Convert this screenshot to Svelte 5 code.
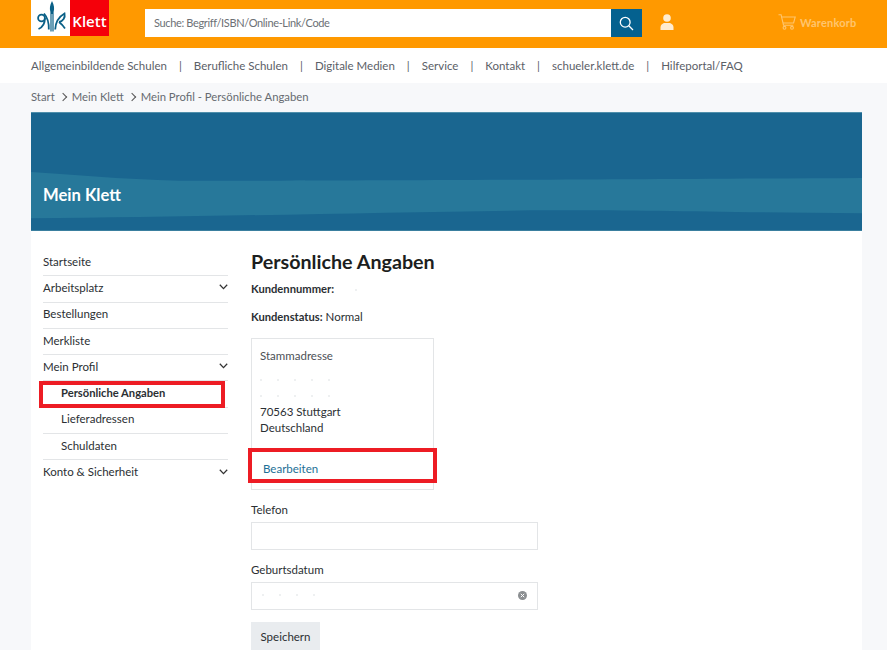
<script>
	const topLinks = [
		'Allgemeinbildende Schulen',
		'Berufliche Schulen',
		'Digitale Medien',
		'Service',
		'Kontakt',
		'schueler.klett.de',
		'Hilfeportal/FAQ'
	];

	const sideNav = [
		{ label: 'Startseite' },
		{ label: 'Arbeitsplatz', arrow: true },
		{ label: 'Bestellungen' },
		{ label: 'Merkliste' },
		{ label: 'Mein Profil', arrow: true },
		{ label: 'Persönliche Angaben', sub: true, active: true },
		{ label: 'Lieferadressen', sub: true },
		{ label: 'Schuldaten', sub: true },
		{ label: 'Konto & Sicherheit', arrow: true }
	];
</script>

<header class="topbar">
	<a class="logo" href="#top" aria-label="Klett">
		<span class="logo-mark">
			<svg width="39" height="36" viewBox="0 0 39 36" fill="none" stroke="#0a6087" stroke-width="1.800" aria-hidden="true">
				<path d="M21 1C18.800 5 18.400 8.500 19.400 12V31.500H20.600V14H21.400V31.500H22.600V12C23.600 8.500 23.200 5 21 1Z" fill="#0a6087" stroke="none" />
				<circle cx="10.500" cy="18" r="3.400" />
				<path d="M13.900 18C14 23 12 27 7.500 29" />
				<path d="M17.800 29.500C18 23 17 18 13 13.500" />
				<path d="M24.200 29.500C24.500 22 27.500 17 33.500 13.500C34.500 17.500 32 21.500 28 22" />
				<path d="M28 22C30 23.500 32 25.500 34 28.500" />
			</svg>
		</span>
		<span class="logo-word">Klett</span>
	</a>

	<form class="search" onsubmit={(e) => e.preventDefault()}>
		<input type="text" placeholder="Suche: Begriff/ISBN/Online-Link/Code" />
		<button type="submit" aria-label="Suchen">
			<svg width="15" height="15" viewBox="0 0 15 15" fill="none" stroke="#fff" stroke-width="1.300">
				<circle cx="6.200" cy="6.200" r="4.900" />
				<path d="M9.800 9.800l4.200 4.200" />
			</svg>
		</button>
	</form>

	<a class="user" href="#top" aria-label="Konto">
		<svg width="14" height="16" viewBox="0 0 14 16" fill="#ffecd0">
			<circle cx="7" cy="4" r="3.800" />
			<path d="M0.500 16v-2.500C0.500 10.500 3 9 5 9h4c2 0 4.500 1.500 4.500 4.500V16z" />
		</svg>
	</a>

	<a class="cart" href="#top">
		<svg width="18" height="16" viewBox="0 0 18 16" fill="none" stroke="#ffc56d" stroke-width="1.100">
			<path d="M0.500 0.800h2.600l2.400 10.400h9.800" />
			<path d="M3.600 3h13.600l-1.600 6H5" />
			<circle cx="6.500" cy="13.800" r="1.400" />
			<circle cx="14" cy="13.800" r="1.400" />
		</svg>
		<span>Warenkorb</span>
	</a>
</header>

<nav class="toplinks">
	{#each topLinks as link, i}
		{#if i > 0}<span class="sep">|</span>{/if}
		<a href="#top">{link}</a>
	{/each}
</nav>

<div class="breadcrumb">
	<a href="#top">Start</a>
	<span class="crumb-arrow"></span>
	<a href="#top">Mein Klett</a>
	<span class="crumb-arrow"></span>
	<span>Mein Profil - Persönliche Angaben</span>
</div>

<main class="page">
	<section class="hero">
		<svg class="wave" viewBox="0 0 831 119" preserveAspectRatio="none" aria-hidden="true">
			<path d="M0 60C60 64 110 69 170 69C300 69 500 68 831 66V102C700 101 580 98 500 99C350 101 150 106 0 107Z" fill="#27789a" />
		</svg>
		<h2>Mein Klett</h2>
	</section>

	<div class="body">
		<aside class="sidebar">
			{#each sideNav as item}
				<a class="side-item" class:sub={item.sub} class:active={item.active} href="#top">
					<span>{item.label}</span>
					{#if item.arrow}
						<svg width="9" height="6" viewBox="0 0 9 6" fill="none" stroke="#333" stroke-width="1.300">
							<path d="M0.800 0.800L4.500 4.600L8.200 0.800" />
						</svg>
					{/if}
					{#if item.active}<span class="mark mark-side"></span>{/if}
				</a>
			{/each}
		</aside>

		<div class="content">
			<h1>Persönliche Angaben</h1>
			<p class="fact first"><strong>Kundennummer:</strong><span class="redacted short"></span></p>
			<p class="fact"><strong>Kundenstatus:</strong> Normal</p>

			<div class="address">
				<div class="address-body">
					<div class="address-title">Stammadresse</div>
					<div class="hidden-line"><span class="redacted"></span></div>
					<div class="hidden-line"><span class="redacted"></span></div>
					<div>70563 Stuttgart</div>
					<div>Deutschland</div>
				</div>
				<div class="address-foot">
					<a href="#top">Bearbeiten</a>
					<span class="mark mark-edit"></span>
				</div>
			</div>

			<label class="field">
				<span>Telefon</span>
				<input type="text" />
			</label>

			<label class="field">
				<span>Geburtsdatum</span>
				<span class="input-wrap">
					<input type="text" />
					<span class="redacted in-input"></span>
					<svg class="clear" width="9" height="9" viewBox="0 0 9 9">
						<circle cx="4.500" cy="4.500" r="4.500" fill="#8c8f92" />
						<path d="M2.800 2.800l3.400 3.400M6.200 2.800L2.800 6.200" stroke="#fff" stroke-width="1" />
					</svg>
				</span>
			</label>

			<button class="save" type="button">Speichern</button>
		</div>
	</div>
</main>

<style>
	:global(body) {
		margin: 0;
		height: 650px;
		overflow: hidden;
		background: #f7f8fa;
		font-family: Lato, 'Noto Sans', sans-serif;
		font-size: 11.500px;
		color: #2b2f33;
	}

	a {
		color: inherit;
		text-decoration: none;
	}

	strong {
		font-size: 11.200px;
	}

	.topbar {
		display: flex;
		align-items: flex-start;
		height: 48px;
		padding-left: 31px;
		background: #ff9900;
		box-sizing: border-box;
	}

	.logo {
		display: flex;
		width: 78px;
		height: 36px;
	}

	.logo-mark {
		width: 39px;
		background: #fff;
		line-height: 0;
	}

	.logo-word {
		width: 39px;
		background: #f5000a;
		color: #fff;
		font-family: 'Open Sans', sans-serif;
		font-size: 15px;
		font-weight: 600;
		line-height: 42px;
		text-align: center;
	}

	.search {
		display: flex;
		width: 497px;
		height: 28px;
		margin: 9px 0 0 36px;
	}

	.search input {
		flex: 1;
		min-width: 0;
		padding: 0 9px 2px;
		border: 0;
		border-radius: 0;
		background: #fff;
		font: inherit;
		font-size: 11px;
		letter-spacing: -0.350px;
		outline: none;
	}

	.search input::placeholder {
		color: #6c7075;
		opacity: 1;
	}

	.search button {
		display: flex;
		align-items: center;
		justify-content: center;
		width: 31px;
		padding: 0;
		border: 0;
		background: #04618f;
	}

	.user {
		margin: 14px 0 0 18px;
		line-height: 0;
	}

	.cart {
		display: flex;
		align-items: center;
		gap: 4px;
		margin: 14px 0 0 104px;
		color: #ffc56d;
		font-size: 11px;
		font-weight: 700;
		letter-spacing: 0.2px;
	}

	.toplinks {
		display: flex;
		align-items: center;
		height: 35px;
		padding-left: 31px;
		background: #fff;
		color: #5b6067;
		white-space: nowrap;
	}

	.sep {
		margin: 0 12px;
	}

	.breadcrumb {
		display: flex;
		align-items: center;
		gap: 5.500px;
		height: 29px;
		padding: 0 0 2px 31px;
		box-sizing: border-box;
		color: #666b71;
		font-size: 11.300px;
	}

	.crumb-arrow {
		width: 5px;
		height: 5px;
		border-top: 1px solid #555;
		border-right: 1px solid #555;
		transform: rotate(45deg);
	}

	.page {
		margin: 0 25px 0 31px;
		background: #fff;
	}

	.hero {
		position: relative;
		display: flex;
		align-items: center;
		height: 119px;
		padding: 47px 0 0 12px;
		box-sizing: border-box;
		background: #1a6690;
		border-top: 1px solid #4f8fab;
		border-bottom: 1px solid #3a7f9f;
	}

	.wave {
		position: absolute;
		inset: 0;
		width: 100%;
		height: 100%;
	}

	.hero h2 {
		position: relative;
		margin: 0;
		color: #fff;
		font-size: 16.600px;
		font-weight: 700;
	}

	.body {
		display: flex;
		padding: 18px 0 0 12px;
	}

	.sidebar {
		display: flex;
		flex-direction: column;
		width: 185px;
		margin-right: 23px;
		padding-top: 1px;
	}

	.side-item {
		position: relative;
		display: flex;
		align-items: center;
		justify-content: space-between;
		height: 26.300px;
		padding-bottom: 3px;
		border-bottom: 1px solid #e3e5e7;
		box-sizing: border-box;
	}

	.side-item:last-child {
		padding-bottom: 4px;
		border-bottom: 0;
	}

	.side-item.sub {
		padding-left: 18px;
	}

	.side-item.active {
		font-size: 11.200px;
		font-weight: 700;
	}

	.mark {
		position: absolute;
		border: 4px solid #ed1c24;
		box-sizing: border-box;
		pointer-events: none;
	}

	.mark-side {
		top: 0;
		left: -4px;
		width: 186px;
		height: 27px;
	}

	.content {
		flex: 1;
	}

	h1 {
		margin: 0;
		color: #1c1e20;
		font-size: 19.700px;
		font-weight: 700;
		line-height: 26px;
	}

	.fact {
		margin: 0 0 14px;
		line-height: 14px;
	}

	.fact.first {
		margin-top: 7px;
	}

	.redacted {
		display: block;
		width: 78px;
		height: 2px;
		background: repeating-linear-gradient(90deg, #eef0f1 0 2px, transparent 2px 17px);
	}

	.redacted.short {
		display: inline-block;
		width: 16px;
		margin-left: 21px;
		vertical-align: middle;
	}

	.redacted.in-input {
		position: absolute;
		top: 12px;
		left: 11px;
		width: 60px;
	}

	.address {
		width: 183px;
		margin-top: 13px;
		border: 1px solid #e3e5e7;
		box-sizing: border-box;
	}

	.address-body {
		padding: 9px 8px 13px;
		line-height: 16px;
	}

	.address-title {
		margin-bottom: 8px;
		color: #4c5156;
	}

	.hidden-line {
		display: flex;
		align-items: center;
		height: 16px;
	}

	.address-foot {
		position: relative;
		height: 40px;
		padding: 13px 0 0 11px;
		box-sizing: border-box;
		color: #1d6f96;
	}

	.mark-edit {
		top: -1px;
		left: -4px;
		width: 189px;
		height: 35px;
	}

	.field {
		display: block;
		margin-top: 12px;
	}

	.field > span:first-child {
		display: block;
		margin-bottom: 4px;
		line-height: 16px;
	}

	.field input {
		display: block;
		width: 287px;
		height: 28px;
		padding: 0 9px;
		border: 1px solid #e3e5e7;
		border-radius: 0;
		box-sizing: border-box;
		background: #fff;
		font: inherit;
	}

	.input-wrap {
		position: relative;
		display: block;
		width: 287px;
	}

	.clear {
		position: absolute;
		top: 9px;
		right: 11px;
	}

	.save {
		display: block;
		width: 69px;
		height: 28px;
		margin-top: 12px;
		padding: 0;
		border: 0;
		background: #e9ecef;
		color: #2b2f33;
		font: inherit;
	}
</style>
